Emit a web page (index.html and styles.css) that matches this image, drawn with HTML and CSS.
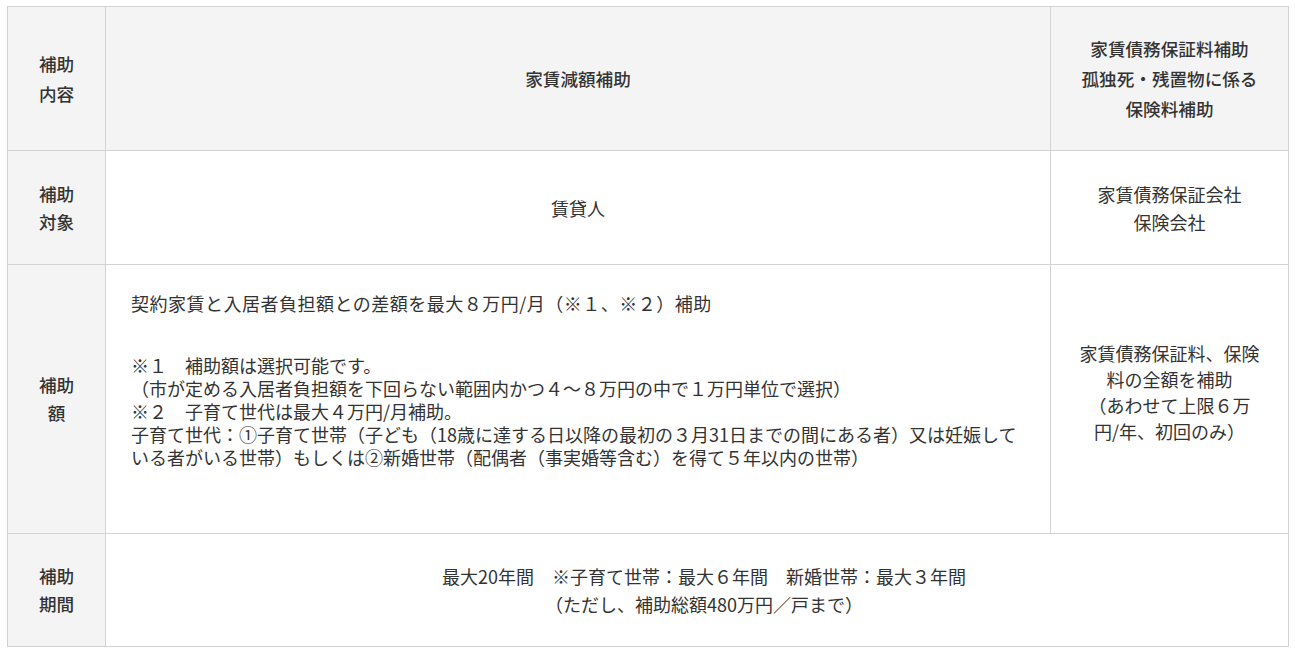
FILE: index.html
```html
<!DOCTYPE html>
<html lang="ja">
<head>
    <meta charset="UTF-8">
    <meta name="viewport" content="width=device-width, initial-scale=1.0">
    <title>補助内容</title>
    <link rel="stylesheet" href="styles.css">
</head>
<body>
    <table class="subsidy-table">
        <colgroup>
            <col class="col-label">
            <col class="col-main">
            <col class="col-side">
        </colgroup>
        <tr class="row-head">
            <th>補助<br>内容</th>
            <th>家賃減額補助</th>
            <th class="side">家賃債務保証料補助<br>孤独死・残置物に係る<br>保険料補助</th>
        </tr>
        <tr class="row-target">
            <th>補助<br>対象</th>
            <td>賃貸人</td>
            <td class="side">家賃債務保証会社<br>保険会社</td>
        </tr>
        <tr class="row-amount">
            <th>補助<br>額</th>
            <td class="detail">
                <p class="lead">契約家賃と入居者負担額との差額を最大８万円/月（※１、※２）補助</p>
                <p class="notes">※１　補助額は選択可能です。<br>（市が定める入居者負担額を下回らない範囲内かつ４～８万円の中で１万円単位で選択）<br>※２　子育て世代は最大４万円/月補助。<br>子育て世代：①子育て世帯（子ども（18歳に達する日以降の最初の３月31日までの間にある者）又は妊娠して<br>いる者がいる世帯）もしくは②新婚世帯（配偶者（事実婚等含む）を得て５年以内の世帯）</p>
            </td>
            <td class="side amount">家賃債務保証料、保険<br>料の全額を補助<br>（あわせて上限６万<br>円/年、初回のみ）</td>
        </tr>
        <tr class="row-period">
            <th>補助<br>期間</th>
            <td class="period" colspan="2">最大20年間　※子育て世帯：最大６年間　新婚世帯：最大３年間<br>（ただし、補助総額480万円／戸まで）</td>
        </tr>
    </table>
</body>
</html>
```

FILE: styles.css
```css
body {
    margin: 6px 6px 0 7px;
    background-color: #fff;
    color: #333;
    font-family: "Noto Sans CJK JP", "Noto Sans", sans-serif;
    font-size: 17.6px;
}

.subsidy-table {
    width: 1282px;
    border-collapse: collapse;
    table-layout: fixed;
}

.col-label {
    width: 98px;
}

.col-side {
    width: 238px;
}

.subsidy-table th,
.subsidy-table td {
    border: 1px solid #d3d3d3;
    text-align: center;
    vertical-align: middle;
    padding: 0 26px;
    line-height: 28px;
}

.subsidy-table td {
    font-size: 18px;
}

.subsidy-table th {
    background-color: #f4f4f4;
    font-weight: 500;
}

.row-head th {
    line-height: 30px;
}

.row-head {
    height: 144px;
}

.row-target {
    height: 114px;
}

.row-amount {
    height: 269px;
}

.row-period {
    height: 113px;
}

.subsidy-table .side {
    padding: 0 18px;
}

.subsidy-table .amount {
    line-height: 26px;
    padding-bottom: 14px;
}

.subsidy-table .period {
    padding: 0 20px 0 34px;
}

.subsidy-table .detail {
    text-align: left;
    padding: 27px 20px 64px 25px;
    line-height: 23px;
}

.detail p {
    margin: 0;
}

.detail .lead {
    margin-bottom: 39px;
    letter-spacing: 0.5px;
}
```
